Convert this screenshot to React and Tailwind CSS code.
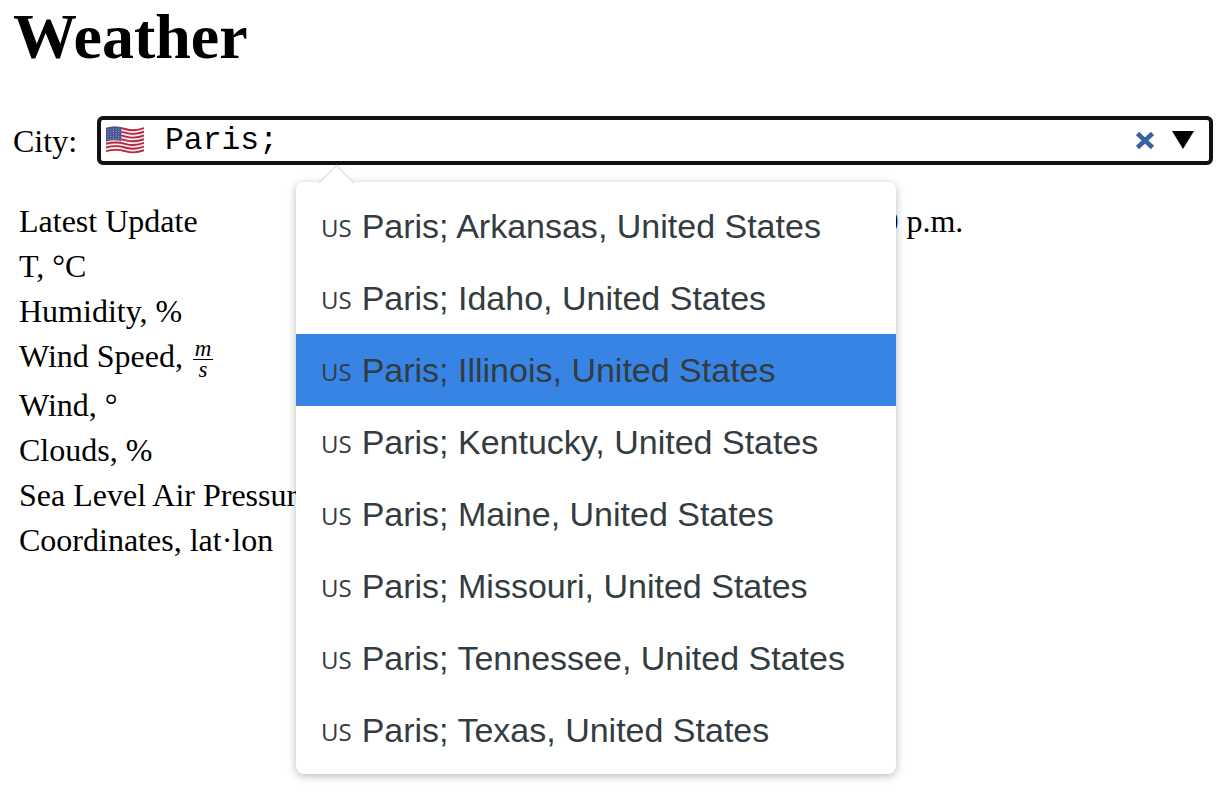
import React from 'react';

const rows = [
  { label: 'Latest Update', value: 'April 14, 2020, 12:30 p.m.' },
  { label: 'T, °C', value: '21' },
  { label: 'Humidity, %', value: '64' },
  { label: 'Wind Speed, ', value: '3', fraction: true },
  { label: 'Wind, °', value: '180' },
  { label: 'Clouds, %', value: '1' },
  { label: 'Sea Level Air Pressure, hPa', value: '1016' },
  { label: 'Coordinates, lat·lon', value: '33.66, -95.56' },
];

const options = ['Arkansas', 'Idaho', 'Illinois', 'Kentucky', 'Maine', 'Missouri', 'Tennessee', 'Texas'];

const Flag = () => {
  const stripes = [0, 1, 2, 3, 4, 5, 6];
  const stars = [];
  for (let y = 0; y < 5; y++) {
    for (let x = 0; x < 6; x++) {
      stars.push([2 + x * 2.7, 3.6 + y * 2.4 + (x < 3 ? -x * 0.3 : -0.9 + (x - 3) * 0.3)]);
    }
  }
  return (
    <svg width="38" height="28" viewBox="0 0 38 28" className="mb-[2px] shrink-0">
      <path d="M0 2C7 0 12 0 19 2S31 4 38 1V25C31 28 26 28 19 26S7 23 0 25Z" fill="#f4eeee" />
      {stripes.map((i) => (
        <path
          key={i}
          d={`M0 ${3 + i * 3.7}C7 ${1 + i * 3.7} 12 ${1 + i * 3.7} 19 ${3 + i * 3.7}S31 ${5 + i * 3.7} 38 ${2 + i * 3.7}`}
          fill="none"
          stroke="#b8283f"
          strokeWidth="1.9"
        />
      ))}
      <path d="M0 2C6 .3 10 .2 15.5 1.2V15C10 14 6 14 0 15.7Z" fill="#4b5290" />
      {stars.map(([x, y]) => (
        <circle key={`${x}-${y}`} cx={x} cy={y} r="0.55" fill="#aab0d0" />
      ))}
    </svg>
  );
};

const App = () => {
  return (
    <div className="relative h-[794px] w-[1227px] overflow-hidden bg-white pl-[13px] pr-[14px] font-['Liberation_Serif',serif] text-black">
      <h1 className="h-[74px] text-[64px] leading-[74px] font-bold">Weather</h1>

      <div className="mt-[42px] flex items-center gap-[20px] text-[32px]">
        <label>City:</label>
        <div className="flex h-[49px] flex-1 items-center rounded-[6px] border-4 border-[#111] pl-[5px] pr-[15px]">
          <Flag />
          <span className="ml-[21px] mt-[1px] font-['Liberation_Mono',monospace] text-[31.4px] leading-none">Paris;</span>
          <svg width="20" height="19" viewBox="0 0 20 19" className="ml-auto">
            <path d="M2.5 2.5L17.5 16.5M17.5 2.5L2.5 16.5" stroke="#38619f" strokeWidth="4.5" />
          </svg>
          <svg width="22" height="18" viewBox="0 0 22 18" className="ml-[17px] mb-[2px]">
            <path d="M0 0H22L11 18Z" fill="#000" />
          </svg>
        </div>
      </div>

      <div className="mt-[34px] pl-[6px] text-[32px] leading-[45px]">
        {rows.map((row) => (
          <div key={row.label} className={`flex ${row.fraction ? 'h-[49px]' : 'h-[45px]'}`}>
            <div className="w-[603px] whitespace-nowrap">
              {row.label}
              {row.fraction && (
                <span className="ml-[2px] inline-flex flex-col items-center align-middle text-[23px] leading-[20px] italic">
                  <span className="w-[20px] border-b border-black text-center">m</span>
                  <span>s</span>
                </span>
              )}
            </div>
            <div className="whitespace-nowrap">{row.value}</div>
          </div>
        ))}
      </div>

      {/* open city dropdown */}
      <div className="absolute left-[296px] top-[182px] w-[600px] rounded-[8px] bg-white py-[8px] font-['Liberation_Sans',sans-serif] text-[34px] text-[#333c40] shadow-[0_2px_8px_rgba(0,0,0,0.28)]">
        <div className="absolute left-[28px] top-[-12px] h-[25px] w-[25px] rotate-45 border-l border-t border-[#d9d9d9] bg-white" />
        {options.map((state) => (
          <div
            key={state}
            className={`relative flex h-[72px] items-center gap-[10px] pl-[25px] ${state === 'Illinois' ? 'bg-[#3884e4]' : ''}`}
          >
            <span className="mb-[3px] font-['Open_Sans',sans-serif] [font-variant:small-caps]">us</span>
            <span>Paris; {state}, United States</span>
          </div>
        ))}
      </div>
    </div>
  );
};

export default App;
